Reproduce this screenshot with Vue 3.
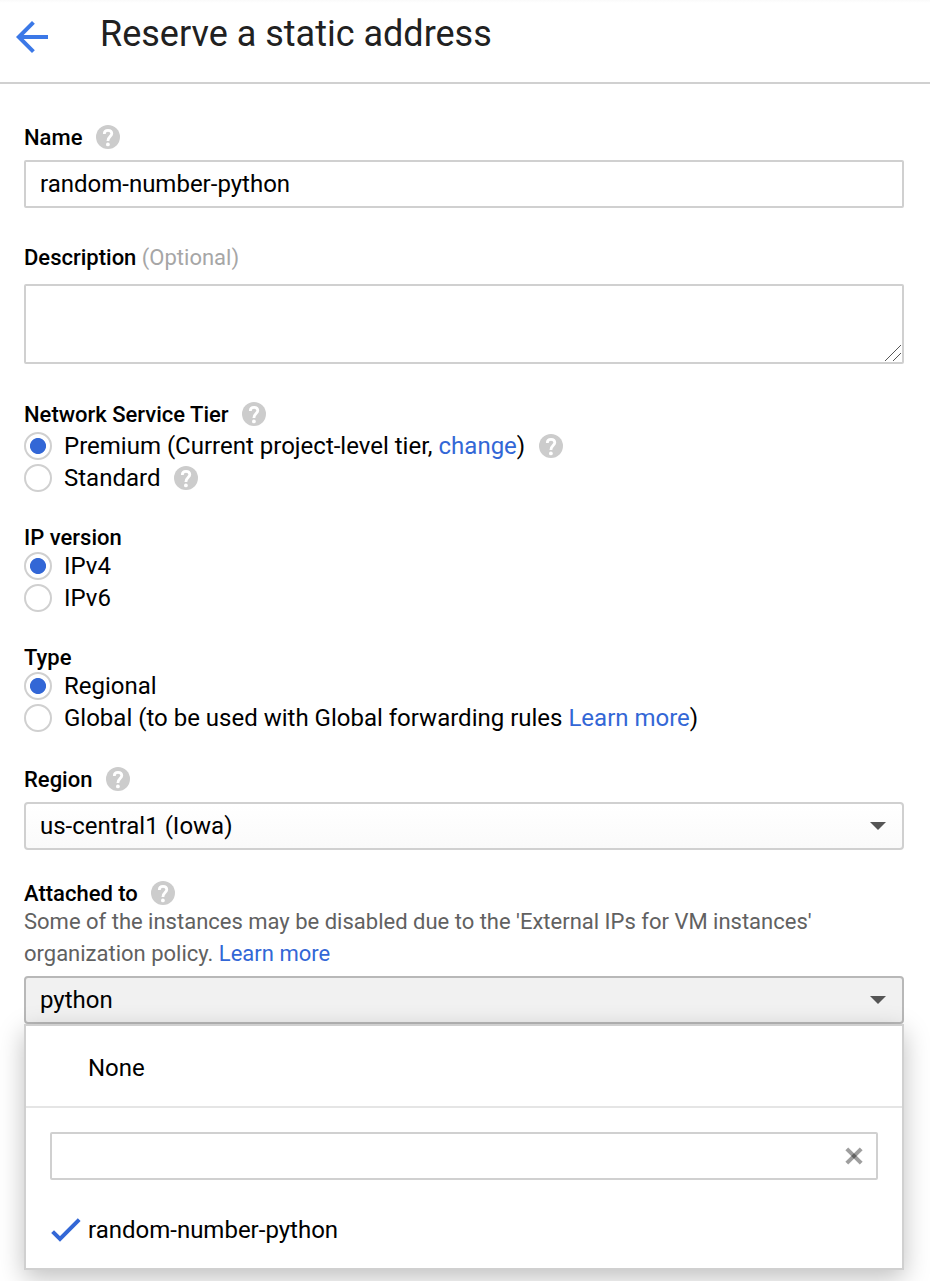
<script setup>
import { h } from 'vue'

const HelpIcon = () =>
  h('svg', { width: 24, height: 24, viewBox: '0 0 24 24', fill: 'none' }, [
    h('circle', { cx: 12, cy: 12, r: 12, fill: '#ccc' }),
    h('path', {
      d: 'M8.3 8.9C8.3 6.7 9.8 5.3 12 5.3s3.8 1.3 3.8 3.3c0 2.9-3.9 3.3-3.9 7.3',
      stroke: '#fff',
      'stroke-width': 2.8
    }),
    h('circle', { cx: 11.9, cy: 19.4, r: 1.9, fill: '#fff' })
  ])
</script>

<template>
  <div class="page">
    <header class="header">
      <svg class="back" width="32" height="32" viewBox="4 4 16 16" fill="#3b78e7">
        <path d="M20 11H7.83l5.59-5.59L12 4l-8 8 8 8 1.41-1.41L7.83 13H20v-2z" />
      </svg>
      <h1 class="title">Reserve a static address</h1>
    </header>

    <main class="form">
      <section class="field name">
        <div class="label"><span>Name</span><HelpIcon class="help" /></div>
        <div class="input">random-number-python</div>
      </section>

      <section class="field description">
        <div class="label"><span>Description <span class="optional">(Optional)</span></span></div>
        <div class="textarea">
          <svg width="16" height="16" viewBox="0 0 16 16" stroke="#555" fill="none">
            <path d="M0 16L16 0M8 16L16 8" />
          </svg>
        </div>
      </section>

      <section class="field tier">
        <div class="label"><span>Network Service Tier</span><HelpIcon class="help" /></div>
        <div class="option">
          <i class="radio on"></i>
          <span>Premium (Current project-level tier, <a>change</a>)</span><HelpIcon class="help" />
        </div>
        <div class="option"><i class="radio"></i><span>Standard</span><HelpIcon class="help" /></div>
      </section>

      <section class="field version">
        <div class="label"><span>IP version</span></div>
        <div class="option"><i class="radio on"></i><span>IPv4</span></div>
        <div class="option"><i class="radio"></i><span>IPv6</span></div>
      </section>

      <section class="field type">
        <div class="label"><span>Type</span></div>
        <div class="option"><i class="radio on"></i><span>Regional</span></div>
        <div class="option">
          <i class="radio"></i>
          <span>Global (to be used with Global forwarding rules <a>Learn more</a>)</span>
        </div>
      </section>

      <section class="field region">
        <div class="label"><span>Region</span><HelpIcon class="help" /></div>
        <div class="select"><span>us-central1 (Iowa)</span><i class="caret"></i></div>
      </section>

      <section class="field attached">
        <div class="label"><span>Attached to</span><HelpIcon class="help" /></div>
        <p class="hint">
          Some of the instances may be disabled due to the 'External IPs for VM instances'<br />
          organization policy. <a>Learn more</a>
        </p>
        <div class="select open"><span>python</span><i class="caret"></i></div>
        <div class="menu">
          <div class="none">None</div>
          <div class="search">
            <svg width="18" height="18" viewBox="0 0 18 18" fill="none" stroke="#000" stroke-width="4">
              <path stroke-opacity=".38" d="M1.8 1.8L16.2 16.2" />
              <path stroke-opacity=".38" d="M16.2 1.8L1.8 16.2" />
            </svg>
          </div>
          <div class="choice">
            <svg width="30" height="24" viewBox="0 0 30 24" fill="none" stroke="#3367d6" stroke-width="4">
              <path d="M1.6 13.6L9 21L28.2 1.6" />
            </svg>
            <span>random-number-python</span>
          </div>
        </div>
      </section>
    </main>
  </div>
</template>

<style>
body {
  background: #fff;
  overflow: hidden;
}
</style>

<style scoped>
.page {
  width: 930px;
  height: 1281px;
  overflow: hidden;
  font-family: Roboto, 'Liberation Sans', sans-serif;
  font-size: 24px;
  color: #000;
  box-sizing: border-box;
}
.page * {
  box-sizing: border-box;
}
.header {
  height: 84px;
  display: flex;
  align-items: flex-start;
  border-bottom: 2px solid #d0d0d0;
  padding-left: 16px;
  background: linear-gradient(#fafafa, #fff 3px);
}
.back {
  margin-top: 21px;
}
.title {
  margin: 12px 0 0 52px;
  font-size: 36px;
  font-weight: 400;
  line-height: 44px;
  color: #212121;
  white-space: nowrap;
}
.form {
  padding: 41px 26px 0 24px;
}
.label {
  height: 24px;
  display: flex;
  align-items: center;
  font-size: 22px;
  font-weight: 500;
  line-height: 24px;
  white-space: nowrap;
}
.label > span {
  padding-top: 2px;
}
.optional {
  font-weight: 400;
  color: #a6a6a6;
}
.help {
  margin-left: 14px;
  flex: none;
}
.label .help {
  margin-left: 13.4px;
}
.input,
.textarea,
.select,
.search {
  border: 2px solid #d0d0d0;
  border-radius: 2px;
  background: #fff;
}
.input {
  height: 48px;
  padding-left: 14px;
  line-height: 44px;
}
.textarea {
  height: 80px;
  display: flex;
  justify-content: flex-end;
  align-items: flex-end;
  padding: 0 1px 1px 0;
}
.name .label {
  margin-bottom: 11px;
}
.description {
  margin-top: 37px;
}
.description .label {
  margin-bottom: 15px;
}
.tier {
  margin-top: 38px;
}
.tier .label {
  margin-bottom: 4px;
}
.version,
.type,
.attached {
  margin-top: 31px;
}
.version .label,
.type .label {
  margin-bottom: 1px;
}
.region {
  margin-top: 33px;
}
.region .label {
  margin-bottom: 11px;
}
.option {
  height: 32px;
  display: flex;
  align-items: center;
  line-height: 32px;
  white-space: nowrap;
}
.radio {
  width: 28px;
  height: 28px;
  flex: none;
  margin-right: 12px;
  border: 2px solid #d0d0d0;
  border-radius: 50%;
}
.radio.on {
  background: radial-gradient(circle, #3367d6 7.6px, transparent 8.4px);
}
a {
  color: #3367d6;
}
.select {
  height: 48px;
  display: flex;
  align-items: center;
  justify-content: space-between;
  padding: 0 16px 0 14px;
  border-radius: 4px;
  background: linear-gradient(#fff, #fafafa);
}
.select.open {
  border-color: #b8b8b8;
  background: #f1f1f1;
}
.caret {
  border: 8px solid transparent;
  border-top-color: #555;
  border-bottom: 0;
}
.hint {
  margin: 0 0 6px;
  padding-top: 1px;
  font-size: 22px;
  line-height: 32px;
  color: #616161;
  white-space: nowrap;
}
.menu {
  height: 246px;
  border: 2px solid #d0d0d0;
  box-shadow: 0 8px 24px rgba(0, 0, 0, 0.25);
  background: #fff;
}
.none {
  height: 82px;
  padding: 0 0 0 62px;
  line-height: 84px;
  border-bottom: 2px solid #e5e5e5;
}
.search {
  height: 48px;
  margin: 24px 24px 0;
  padding-right: 13px;
  display: flex;
  align-items: center;
  justify-content: flex-end;
}
.choice {
  height: 56px;
  margin-top: 22px;
  padding-left: 25px;
  display: flex;
  align-items: center;
}
.choice svg {
  margin-right: 7px;
}
</style>
